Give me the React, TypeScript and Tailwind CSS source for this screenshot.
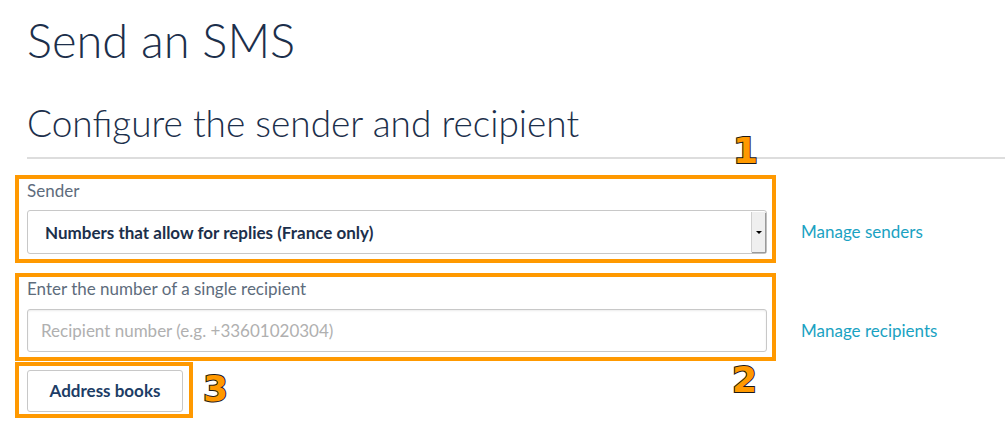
export default function App() {
  const stroke = "[-webkit-text-stroke:2px_#1a1a1a] [paint-order:stroke_fill]";
  return (
    <div className="relative h-[438px] w-full overflow-hidden bg-white font-['Lato','Noto_Sans',sans-serif] text-[#1c2f4b]">
      <div className="pl-[27px]">
        <h1 className="pt-[10px] text-[47px] font-light leading-[60px]">Send an SMS</h1>
        <h2 className="mt-[30px] text-[37px] font-light leading-[46px]">Configure the sender and recipient</h2>
        <div className="mt-[11px] h-[2px] bg-[#dddddd]" />

        <div className="relative mt-[22px] grid w-max grid-cols-[740px_auto] items-center">
          <div className="pointer-events-none absolute left-[-12px] top-[-6px] h-[88px] w-[761px] border-4 border-[#ff9900]" />
          <label className="col-start-1 text-[17px] leading-[20px] text-[#5e6c7c]">Sender</label>
          <div className="col-start-1 mt-[9px] flex h-[44px] items-center rounded-[3px] border border-[#c8c8c8] bg-white pl-[17px] pr-[1px]">
            <span className="flex-1 pt-[1px] text-[17px] font-bold text-[#1c2f4b]">Numbers that allow for replies (France only)</span>
            <span className="flex h-[40px] w-[14px] items-center justify-center border-l border-[#cfcfcf] bg-[#efefef] shadow-[1px_1px_1px_#9a9a9a]">
              <span className="h-0 w-0 border-x-[3px] border-t-[3px] border-x-transparent border-t-black" />
            </span>
          </div>
          <a className="col-start-2 row-start-2 ml-[34px] pt-[8px] text-[17px] text-[#1aa2c2]">Manage senders</a>
        </div>

        <div className="relative mt-[25px] grid w-max grid-cols-[740px_auto] items-center">
          <div className="pointer-events-none absolute left-[-12px] top-[-6px] h-[88px] w-[761px] border-4 border-[#ff9900]" />
          <label className="col-start-1 text-[17px] leading-[20px] text-[#5e6c7c]">Enter the number of a single recipient</label>
          <div className="col-start-1 mt-[10px] flex h-[43px] items-center rounded-[3px] border border-[#c8c8c8] bg-white pl-[13px] shadow-[inset_0_1px_2px_rgba(0,0,0,0.08)]">
            <span className="text-[17px] text-[#b0b0b0]">Recipient number (e.g. +33601020304)</span>
          </div>
          <a className="col-start-2 row-start-2 ml-[34px] pt-[10px] text-[17px] text-[#1aa2c2]">Manage recipients</a>
        </div>

        <div className="relative mt-[18px] w-max">
          <div className="pointer-events-none absolute left-[-12px] top-[-8px] h-[56px] w-[178px] border-4 border-[#ff9900]" />
          <button className="flex h-[42px] w-[156px] items-center justify-center rounded-[3px] border border-[#c8c8c8] bg-white text-[17px] font-bold text-[#1d3d66]">
            Address books
          </button>
        </div>
      </div>

      <span className={`absolute left-[733px] top-[129px] font-['DejaVu_Sans',sans-serif] text-[36px] font-bold leading-[44px] text-[#ff9900] ${stroke}`}>1</span>
      <span className={`absolute left-[732px] top-[358px] font-['DejaVu_Sans',sans-serif] text-[36px] font-bold leading-[44px] text-[#ff9900] ${stroke}`}>2</span>
      <span className={`absolute left-[203px] top-[367px] font-['DejaVu_Sans',sans-serif] text-[36px] font-bold leading-[44px] text-[#ff9900] ${stroke}`}>3</span>
    </div>
  );
}
